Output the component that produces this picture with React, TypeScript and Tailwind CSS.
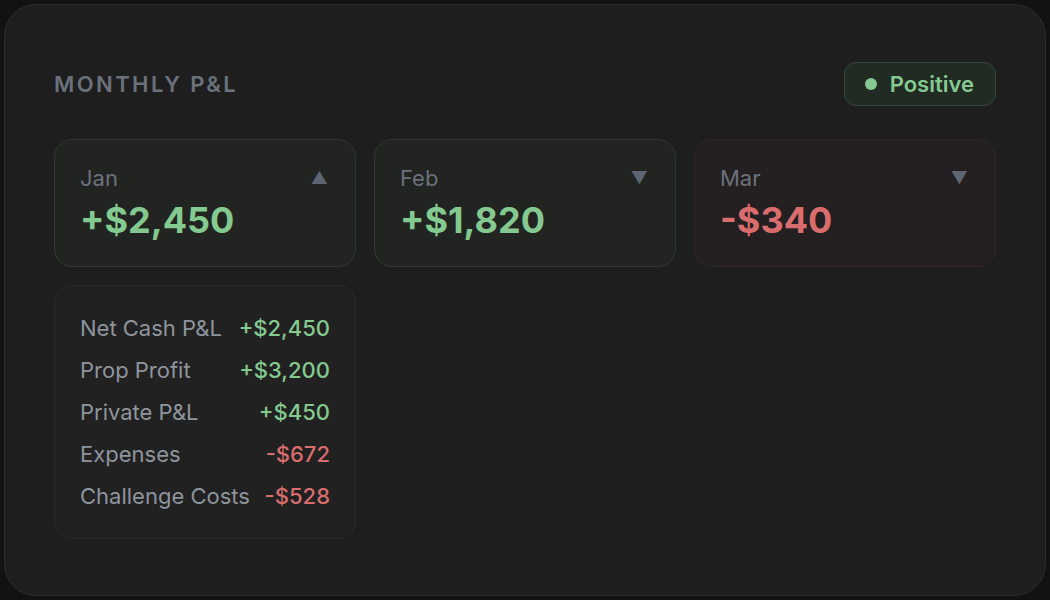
import React from "react";

interface MonthItem {
  month: string;
  value: string;
  up: boolean;
  positive: boolean;
}

const months: MonthItem[] = [
  { month: "Jan", value: "+$2,450", up: true, positive: true },
  { month: "Feb", value: "+$1,820", up: false, positive: true },
  { month: "Mar", value: "-$340", up: false, positive: false },
];

const rows = [
  { label: "Net Cash P&L", value: "+$2,450", positive: true },
  { label: "Prop Profit", value: "+$3,200", positive: true },
  { label: "Private P&L", value: "+$450", positive: true },
  { label: "Expenses", value: "-$672", positive: false },
  { label: "Challenge Costs", value: "-$528", positive: false },
];

const App: React.FC = () => {
  return (
    <div
      className="w-[1050px] h-[600px] bg-[#121212] p-[4px]"
      style={{ fontFamily: "Inter, 'Noto Sans', sans-serif" }}
    >
      <div className="h-full rounded-[32px] border border-[#2c2c2c] bg-[#1e1e1e] px-[49px] pt-[57px]">
        <div className="flex items-center justify-between">
          <h2 className="text-[22px] font-semibold tracking-[0.11em] text-[#6b717c]">
            MONTHLY P&amp;L
          </h2>
          <div className="flex items-center gap-[13px] h-[44px] pl-[20px] pr-[21px] rounded-[12px] border border-[#33463a] bg-[#212a23]">
            <span className="w-[12px] h-[12px] rounded-full bg-[#84c98f]" />
            <span className="text-[22px] font-semibold text-[#84c98f]">Positive</span>
          </div>
        </div>

        <div className="grid grid-cols-3 gap-[18px] mt-[33px]">
          {months.map((m) => (
            <div
              key={m.month}
              className={`h-[128px] rounded-[18px] border px-[25px] pt-[24px] ${
                m.positive
                  ? "border-[#2f3931] bg-[#212421]"
                  : "border-[#30262a] bg-[#241f20]"
              }`}
            >
              <div className="flex items-start justify-between">
                <span className="text-[22px] leading-[28px] text-[#6b717c]">{m.month}</span>
                <span className="text-[17px] leading-[24px] text-[#5f6573] pr-[2px] mt-[2px]">
                  {m.up ? "▲" : "▼"}
                </span>
              </div>
              <div
                className={`text-[36px] leading-[44px] font-bold mt-[6px] ${
                  m.positive ? "text-[#84c98f]" : "text-[#d96d6d]"
                }`}
              >
                {m.value}
              </div>
            </div>
          ))}
        </div>

        <div className="grid grid-cols-3 gap-[18px] mt-[18px]">
          <div className="rounded-[18px] border border-[#2b2b2b] bg-[#212121] px-[25px] pt-[28px] pb-[28px] flex flex-col gap-[14px]">
            {rows.map((r) => (
              <div key={r.label} className="flex items-center justify-between h-[28px]">
                <span className="text-[22px] text-[#8e949d]">{r.label}</span>
                <span
                  className={`text-[22px] font-medium ${
                    r.positive ? "text-[#84c98f]" : "text-[#d96d6d]"
                  }`}
                >
                  {r.value}
                </span>
              </div>
            ))}
          </div>
        </div>
      </div>
    </div>
  );
};

export default App;
